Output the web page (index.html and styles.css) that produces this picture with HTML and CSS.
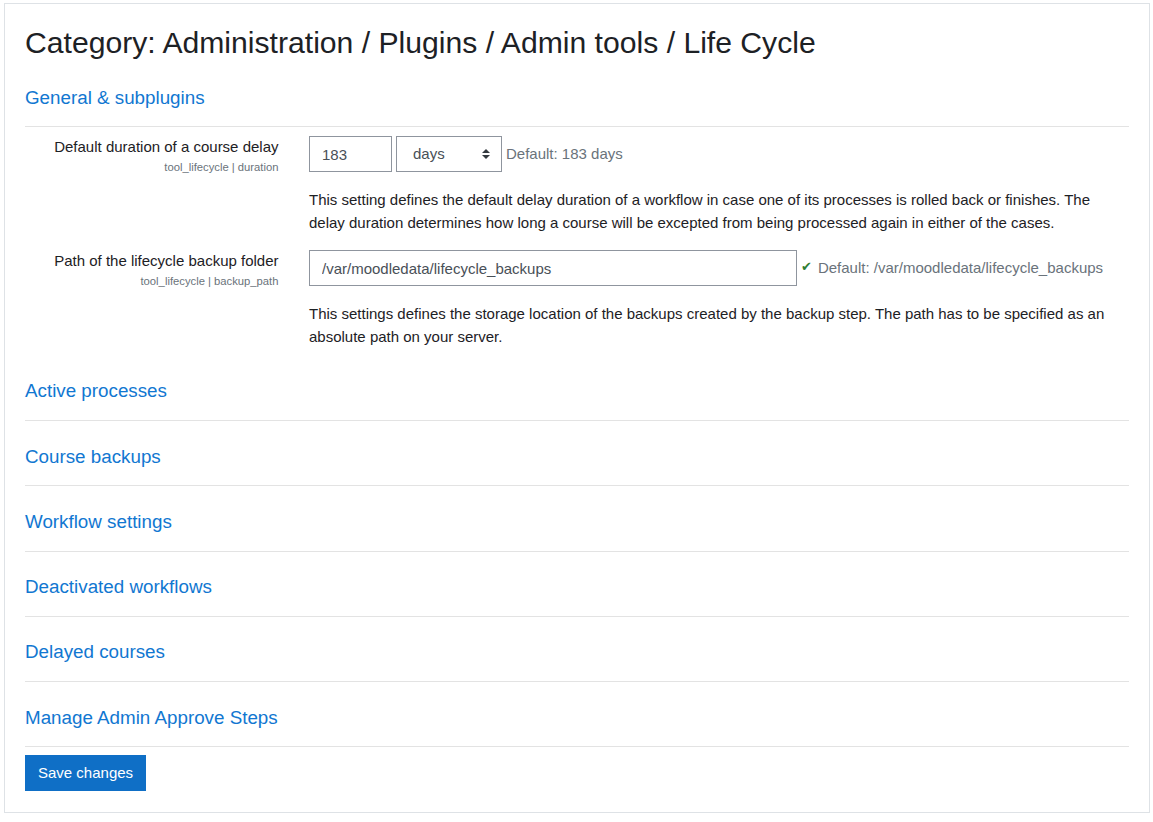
FILE: index.html
```html
<!DOCTYPE html>
<html lang="en">
<head>
<meta charset="utf-8">
<title>Category: Administration / Plugins / Admin tools / Life Cycle</title>
<link rel="stylesheet" href="styles.css">
</head>
<body>
<div class="page">
  <form class="box">
    <h2 class="title">Category: Administration / Plugins / Admin tools / Life Cycle</h2>

    <section class="sect">
      <h3 class="sect-head">General &amp; subplugins</h3>
      <div class="sect-body">
        <div class="setting">
          <div class="label">
            <div class="label-name">Default duration of a course delay</div>
            <div class="label-short">tool_lifecycle | duration</div>
          </div>
          <div class="field">
            <div class="controls">
              <input class="input input-num" type="text" value="183">
              <span class="select-wrap">
                <select class="select"><option>days</option></select>
                <svg class="select-arrow" width="8" height="10" viewBox="0 0 8 10"><path d="M0 4 L4 0 L8 4 Z M0 6 L4 10 L8 6 Z" fill="#343a40"/></svg>
              </span>
              <span class="default">Default: 183 days</span>
            </div>
            <div class="desc">This setting defines the default delay duration of a workflow in case one of its processes is rolled back or finishes. The delay duration determines how long a course will be excepted from being processed again in either of the cases.</div>
          </div>
        </div>

        <div class="setting">
          <div class="label">
            <div class="label-name">Path of the lifecycle backup folder</div>
            <div class="label-short">tool_lifecycle | backup_path</div>
          </div>
          <div class="field">
            <div class="controls">
              <input class="input input-path" type="text" value="/var/moodledata/lifecycle_backups">
              <span class="check">✔</span>
              <span class="default">Default: /var/moodledata/lifecycle_backups</span>
            </div>
            <div class="desc">This settings defines the storage location of the backups created by the backup step. The path has to be specified as an absolute path on your server.</div>
          </div>
        </div>
      </div>
    </section>

    <section class="sect"><h3 class="sect-head">Active processes</h3></section>
    <section class="sect"><h3 class="sect-head">Course backups</h3></section>
    <section class="sect"><h3 class="sect-head">Workflow settings</h3></section>
    <section class="sect"><h3 class="sect-head">Deactivated workflows</h3></section>
    <section class="sect"><h3 class="sect-head">Delayed courses</h3></section>
    <section class="sect"><h3 class="sect-head">Manage Admin Approve Steps</h3></section>

    <div class="actions">
      <button class="btn" type="button">Save changes</button>
    </div>
  </form>
</div>
</body>
</html>
```

FILE: styles.css
```css
html, body {
  margin: 0;
  padding: 0;
  background: #fff;
}

body {
  font-family: "Liberation Sans", Arial, sans-serif;
  font-size: 15px;
  line-height: 22.5px;
  color: #1d2125;
}

.page {
  padding: 3px 3px 0 4px;
}

.box {
  width: 1146px;
  box-sizing: border-box;
  border: 1px solid #dee2e6;
  padding: 21px 20px 21px 20px;
  margin: 0;
}

.title {
  margin: 0 0 1px 0;
  font-size: 30.15px;
  line-height: 36px;
  font-weight: normal;
  color: #1d2125;
}

.sect {
  padding-top: 24.5px;
}

.sect-head {
  margin: 0;
  padding: 0 0 17.25px 0;
  border-bottom: 1px solid #e3e3e3;
  font-size: 18.8px;
  line-height: 22.5px;
  font-weight: normal;
  color: #1177d1;
}

.sect-body {
  padding: 9px 0 7.5px 0;
}

.setting {
  display: grid;
  grid-template-columns: 253.5px 1fr;
  column-gap: 30.5px;
}

.setting + .setting {
  margin-top: 16px;
}

.label {
  text-align: right;
}

.label-name {
  font-size: 15px;
  line-height: 22.5px;
}

.label-short {
  font-size: 11.25px;
  line-height: 16.875px;
  color: #6a737b;
}

.controls {
  display: flex;
  align-items: center;
  height: 36px;
}

.input {
  box-sizing: border-box;
  height: 36px;
  margin: 0;
  padding: 6px 12px;
  border: 1px solid #8f959e;
  border-radius: 0;
  font-family: "Liberation Sans", Arial, sans-serif;
  font-size: 15px;
  line-height: 22.5px;
  color: #495057;
  background: #fff;
}

.input-num {
  width: 83px;
}

.input-path {
  width: 488px;
}

.select-wrap {
  position: relative;
  display: inline-block;
  margin-left: 4px;
  height: 36px;
}

.select {
  -webkit-appearance: none;
  appearance: none;
  box-sizing: border-box;
  width: 106px;
  height: 36px;
  margin: 0;
  padding: 6px 28px 6px 16px;
  border: 1px solid #8f959e;
  border-radius: 0;
  background: #fff;
  font-family: "Liberation Sans", Arial, sans-serif;
  font-size: 15px;
  line-height: 22.5px;
  color: #495057;
}

.select-arrow {
  position: absolute;
  right: 12px;
  top: 13px;
  pointer-events: none;
}

.default {
  margin-left: 4px;
  margin-top: -1px;
  color: #6a737b;
}

.check {
  margin-left: 4px;
  font-family: "DejaVu Sans", sans-serif;
  font-size: 13px;
  line-height: 22.5px;
  color: #2f7d32;
  margin-top: -2px;
}

.check + .default {
  margin-left: 6px;
}

.desc {
  margin-top: 17px;
}

.actions {
  margin-top: 7.75px;
}

.btn {
  box-sizing: border-box;
  height: 36px;
  margin: 0;
  padding: 6px 12px;
  border: 1px solid #0f6fc6;
  border-radius: 0;
  background: #0f6fc6;
  color: #fff;
  font-family: "Liberation Sans", Arial, sans-serif;
  font-size: 15px;
  line-height: 22.5px;
}
```
